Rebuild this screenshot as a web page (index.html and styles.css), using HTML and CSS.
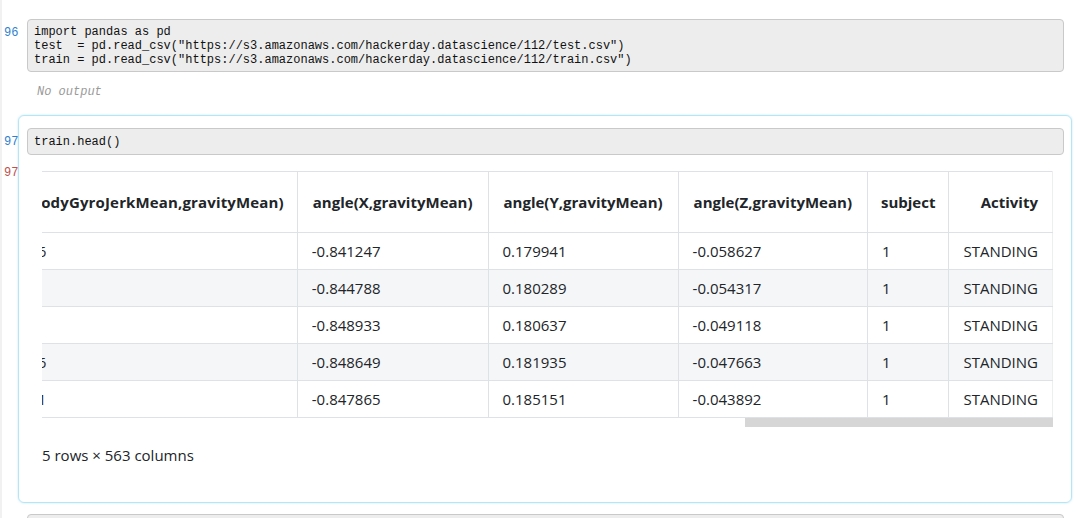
FILE: index.html
```html
<!DOCTYPE html>
<html>
<head>
<meta charset="utf-8">
<link rel="stylesheet" href="styles.css">
</head>
<body>
<div class="cell">
  <div class="prompt in">96</div>
  <pre class="code">import pandas as pd
test  = pd.read_csv("https://s3.amazonaws.com/hackerday.datascience/112/test.csv")
train = pd.read_csv("https://s3.amazonaws.com/hackerday.datascience/112/train.csv")</pre>
  <div class="no-output">No output</div>
</div>

<div class="cell selected">
  <div class="prompt in">97</div>
  <pre class="code code-single">train.head()</pre>
  <div class="output">
    <div class="prompt out">97</div>
    <div class="scroll">
      <table class="df">
        <thead>
          <tr>
            <th class="first">angle(tBodyGyroJerkMean,gravityMean)</th>
            <th class="wide">angle(X,gravityMean)</th>
            <th class="wide">angle(Y,gravityMean)</th>
            <th class="wide">angle(Z,gravityMean)</th>
            <th class="narrow">subject</th>
            <th>Activity</th>
          </tr>
        </thead>
        <tbody>
          <tr><td>-0.018446</td><td>-0.841247</td><td>0.179941</td><td>-0.058627</td><td>1</td><td>STANDING</td></tr>
          <tr><td>0.703511</td><td>-0.844788</td><td>0.180289</td><td>-0.054317</td><td>1</td><td>STANDING</td></tr>
          <tr><td>0.808529</td><td>-0.848933</td><td>0.180637</td><td>-0.049118</td><td>1</td><td>STANDING</td></tr>
          <tr><td>-0.485366</td><td>-0.848649</td><td>0.181935</td><td>-0.047663</td><td>1</td><td>STANDING</td></tr>
          <tr><td>-0.615971</td><td>-0.847865</td><td>0.185151</td><td>-0.043892</td><td>1</td><td>STANDING</td></tr>
        </tbody>
      </table>
    </div>
    <div class="hscroll"><div class="thumb"></div></div>
    <div class="shape">5 rows × 563 columns</div>
  </div>
</div>

<div class="cell next">
  <pre class="code">import matplotlib.pyplot as plt</pre>
</div>
</body>
</html>
```

FILE: styles.css
```css
*, *::before, *::after {
  box-sizing: border-box;
}
html, body {
  margin: 0;
  padding: 0;
  background: #ffffff;
  overflow: hidden;
  height: 518px;
}
body {
  border-left: 2px solid #f1f1f1;
  padding-top: 6px;
  font-family: "Open Sans", "Noto Sans", sans-serif;
  color: #212529;
}
.cell {
  position: relative;
  margin-left: 16px;
  width: 1054px;
  border: 1px solid transparent;
  border-radius: 6px;
  padding: 12px 7px 12px 8px;
}
.cell.selected {
  margin-top: 3px;
  border-color: #b4e6f6;
  box-shadow: 0 0 2px rgba(120, 205, 235, 0.5);
  padding-bottom: 37px;
}
.cell.next {
  padding-top: 10px;
}
.prompt {
  position: absolute;
  left: -15px;
  font-family: "Liberation Mono", monospace;
  font-size: 12px;
  line-height: 14px;
}
.prompt.in {
  top: 19px;
  color: #2f7fd0;
}
.prompt.out {
  top: -5px;
  left: -23px;
  color: #c0504d;
}
.code {
  margin: 0;
  background: #ededed;
  border: 1px solid #c9c9c9;
  border-radius: 4px;
  padding: 5px 6px 4px;
  font-family: "Liberation Mono", monospace;
  font-size: 12px;
  line-height: 14px;
  color: #111;
  white-space: pre;
}
.code-single {
  padding: 6px 6px 5px;
}
.no-output {
  margin-top: 13px;
  padding-left: 10px;
  font-family: "Liberation Mono", monospace;
  font-size: 12px;
  line-height: 14px;
  font-style: italic;
  color: #9a9a9a;
}
.output {
  position: relative;
  margin-top: 16px;
  padding-left: 15px;
  padding-right: 11px;
}
.scroll {
  display: flex;
  justify-content: flex-end;
  overflow: hidden;
}
.df {
  border-collapse: collapse;
  flex: none;
  font-size: 15px;
  line-height: 20px;
  border-top: 1px solid #dee2e6;
}
.df th {
  text-align: right;
  font-weight: 700;
  padding: 20px 14px;
  border-bottom: 1px solid #dee2e6;
  border-right: 1px solid #dee2e6;
  white-space: nowrap;
}
.df th.first {
  letter-spacing: 0.15px;
  padding-right: 13px;
}
.df th.wide {
  padding-left: 15px;
  padding-right: 15px;
}
.df th.narrow {
  padding-left: 13px;
  padding-right: 13px;
}
.df td {
  text-align: left;
  padding: 8px 14px;
  border-bottom: 1px solid #dee2e6;
  border-right: 1px solid #dee2e6;
  white-space: nowrap;
}
.df th:last-child, .df td:last-child {
  border-right: 1px solid #eceeef;
}
.df tbody tr:nth-child(even) {
  background: #f5f6f8;
}
.hscroll {
  display: flex;
  justify-content: flex-end;
  height: 9px;
}
.thumb {
  width: 308px;
  background: #d6d6d6;
}
.shape {
  margin-top: 18px;
  font-size: 15px;
  line-height: 20px;
}
```
